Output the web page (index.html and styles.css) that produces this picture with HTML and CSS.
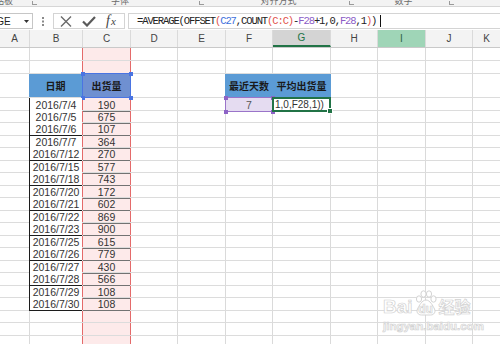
FILE: index.html
```html
<!DOCTYPE html>
<html lang="zh-CN">
<head>
<meta charset="utf-8">
<title>Excel - 平均出货量</title>
<link rel="stylesheet" href="styles.css">
</head>
<body>
<div class="app">
  <div class="ribbon">
    <div class="grp grp1"><span class="lbl">剪贴板</span><span class="launch"></span></div>
    <div class="grp grp2"><span class="lbl">字体</span><span class="launch"></span></div>
    <div class="grp grp3"><span class="lbl">对齐方式</span><span class="launch"></span></div>
    <div class="grp grp4"><span class="lbl">数字</span><span class="launch"></span></div>
  </div>

  <div class="fbar">
    <div class="namebox"><span class="nb-text">AVERAGE</span><svg class="nb-arrow" width="5" height="3" viewBox="0 0 5 3"><path d="M0 0H5L2.5 3Z" fill="#333"/></svg></div>
    <div class="grip"><svg width="2" height="9" viewBox="0 0 2 9"><rect x="0" y="0" width="2" height="2" fill="#8a8a8a"/><rect x="0" y="3.5" width="2" height="2" fill="#8a8a8a"/><rect x="0" y="7" width="2" height="2" fill="#8a8a8a"/></svg></div>
    <div class="fbtns">
      <svg class="ic-x" width="12" height="11" viewBox="0 0 12 11"><path d="M1 0.5L11 10.5M11 0.5L1 10.5" stroke="#6a6a6a" stroke-width="1.4" fill="none"/></svg>
      <svg class="ic-ok" width="14" height="11" viewBox="0 0 14 11"><path d="M1 5.5L5 9.5L13 1" stroke="#5a5a5a" stroke-width="2.2" fill="none"/></svg>
      <span class="ic-fx"><span class="fx-f">f</span><span class="fx-x">x</span></span>
    </div>
    <div class="finput"><span class="ftext">=AVERAGE(OFFSET<span class="pr">(</span><span class="rb">C27</span>,COUNT<span class="pr">(C:C)</span>-<span class="rp">F28</span>+1,0,<span class="rp">F28</span>,1<span class="pr">)</span>)</span><span class="caret"></span></div>
  </div>

  <div class="colhdr">
    <div class="ch">A</div><div class="ch">B</div><div class="ch">C</div><div class="ch">D</div><div class="ch">E</div><div class="ch">F</div><div class="ch sel">G</div><div class="ch">H</div><div class="ch hov">I</div><div class="ch">J</div><div class="ch">K</div>
  </div>

  <div class="sheet">
    <div class="row r13"></div>
    <div class="row r13"></div>
    <div class="row r24">
      <div class="cell hd hb">日期</div>
      <div class="cell hd hc">出货量<i class="h tl"></i><i class="h tr"></i><i class="h bl"></i><i class="h br"></i></div>
      <div class="cell hd hf">最近天数</div>
      <div class="cell hd hg">平均出货量</div>
    </div>
    <div class="row">
      <div class="cell b">2016/7/4</div><div class="cell c">190</div>
      <div class="cell days">7<i class="h tl"></i><i class="h tr"></i><i class="h bl"></i><i class="h br"></i></div>
      <div class="cell active"><span class="edit">1,0,F28,1))</span><i class="gh"></i></div>
    </div>
    <div class="row"><div class="cell b">2016/7/5</div><div class="cell c">675</div></div>
    <div class="row"><div class="cell b">2016/7/6</div><div class="cell c">107</div></div>
    <div class="row"><div class="cell b">2016/7/7</div><div class="cell c">364</div></div>
    <div class="row"><div class="cell b">2016/7/12</div><div class="cell c">270</div></div>
    <div class="row"><div class="cell b">2016/7/15</div><div class="cell c">577</div></div>
    <div class="row"><div class="cell b">2016/7/18</div><div class="cell c">743</div></div>
    <div class="row"><div class="cell b">2016/7/20</div><div class="cell c">172</div></div>
    <div class="row"><div class="cell b">2016/7/21</div><div class="cell c">602</div></div>
    <div class="row"><div class="cell b">2016/7/22</div><div class="cell c">869</div></div>
    <div class="row"><div class="cell b">2016/7/23</div><div class="cell c">900</div></div>
    <div class="row"><div class="cell b">2016/7/25</div><div class="cell c">615</div></div>
    <div class="row"><div class="cell b">2016/7/26</div><div class="cell c">779</div></div>
    <div class="row"><div class="cell b">2016/7/27</div><div class="cell c">430</div></div>
    <div class="row"><div class="cell b">2016/7/28</div><div class="cell c">566</div></div>
    <div class="row"><div class="cell b">2016/7/29</div><div class="cell c">108</div></div>
    <div class="row"><div class="cell b">2016/7/30</div><div class="cell c">108</div></div>
    <div class="row"></div>
    <div class="row"></div>
    <div class="row"></div>

    <div class="wm">
      <div class="wm-top">
        <span class="wm-bai">Bai</span>
        <span class="wm-paw"><svg width="26" height="26" viewBox="0 0 26 26"><g fill="#fff" stroke="#d2d2d2" stroke-width="1"><ellipse cx="6" cy="9" rx="2.6" ry="3.2"/><ellipse cx="10.5" cy="4" rx="2.6" ry="3.2"/><ellipse cx="16" cy="4" rx="2.6" ry="3.2"/><ellipse cx="20.5" cy="9" rx="2.6" ry="3.2"/><path d="M13 10C9 10 6 16 4.5 19C3 22 5 25 8.5 25H17.5C21 25 23 22 21.5 19C20 16 17 10 13 10Z"/></g></svg><span class="wm-du">du</span></span>
        <span class="wm-jy">经验</span>
      </div>
      <div class="wm-url">jingyan.baidu.com</div>
    </div>
  </div>
</div>
</body>
</html>
```

FILE: styles.css
```css
* { box-sizing: border-box; }

html, body {
  margin: 0;
  padding: 0;
}

body {
  width: 500px;
  height: 344px;
  overflow: hidden;
  background: #fff;
  font-family: "Liberation Sans", Arial, sans-serif;
}

.app {
  --cols: 30px 53px 48px 47px 48px 47px 58px 47px 48px 47px 28px;
  width: 500px;
  height: 344px;
  overflow: hidden;
  display: flex;
  flex-direction: column;
}

/* ribbon bottom strip */
.ribbon {
  flex: none;
  height: 7px;
  display: flex;
  background: #f3f3f3;
  border-bottom: 1px solid #d6d6d6;
  overflow: hidden;
}

.grp {
  flex: none;
  display: flex;
  align-items: flex-end;
}

.grp1 { width: 41px; justify-content: flex-end; }
.grp2 { width: 167px; }
.grp3 { width: 150px; }
.grp4 { width: 100px; }

.lbl {
  font: 9px/11px "Noto Sans CJK SC", sans-serif;
  color: #6a6a6a;
  white-space: nowrap;
  margin: 0 auto;
}

.grp1 .lbl { margin: 0; }
.grp1 .launch { margin-left: 19px; }

.launch {
  flex: none;
  width: 5px;
  height: 4px;
  margin: 0 4px 1px 0;
  border-left: 1px solid #9a9a9a;
  border-bottom: 1px solid #9a9a9a;
}

/* formula bar */
.fbar {
  flex: none;
  height: 23px;
  display: flex;
  align-items: flex-start;
  padding-top: 6px;
  background: #fff;
}

.namebox {
  flex: none;
  margin-left: -41px;
  width: 74px;
  height: 16px;
  border: 1px solid #c6c6c6;
  display: flex;
  align-items: center;
  justify-content: space-between;
  padding: 0 3px;
  font-size: 10px;
  color: #222;
}

.grip {
  flex: none;
  width: 20px;
  height: 16px;
  display: flex;
  align-items: center;
  justify-content: center;
}

.fbtns {
  flex: none;
  width: 72px;
  height: 16px;
  border: 1px solid #d4d4d4;
  display: flex;
  align-items: center;
  padding-left: 6px;
  gap: 10px;
}

.ic-fx {
  font-family: "Liberation Serif", serif;
  font-style: italic;
  color: #444;
  line-height: 14px;
  display: flex;
  align-items: baseline;
}

.fx-f { font-size: 14px; }
.fx-x { font-size: 11px; margin-left: 1px; }

.finput {
  flex: 1;
  margin-left: 3px;
  height: 16px;
  border: 1px solid #d4d4d4;
  border-right: none;
  display: flex;
  align-items: center;
  padding-left: 8px;
}

.ftext {
  font-family: "Liberation Mono", monospace;
  font-size: 10.5px;
  letter-spacing: -1.1px;
  color: #222;
  white-space: nowrap;
}

.pr { color: #e2534d; }
.rb { color: #3d6fdc; }
.rp { color: #8b5cc6; }

.caret {
  width: 1px;
  height: 12px;
  background: #111;
  margin-left: 4px;
}

/* column headers */
.colhdr {
  flex: none;
  height: 18px;
  display: grid;
  grid-template-columns: var(--cols);
  background: #f3f3f3;
  border-bottom: 1px solid #c9c9c9;
}

.ch {
  border-right: 1px solid #dadada;
  text-align: center;
  font-size: 10px;
  line-height: 17px;
  color: #444;
}

.ch.sel {
  background: #d4d4d4;
  border-bottom: 2px solid #217346;
  color: #217346;
  line-height: 15px;
}

.ch.hov {
  background: #9fd5b7;
  color: #2f5f45;
}

/* sheet */
.sheet {
  flex: 1;
  position: relative;
  overflow: hidden;
  background:
    linear-gradient(to right, transparent 82px, #e46a6a 82px 83px, #fdeaea 83px 130px, #e46a6a 130px 131px, transparent 131px),
    linear-gradient(to right,
      transparent 29px, #dadada 29px 30px,
      transparent 30px 82px, #dadada 82px 83px,
      transparent 83px 130px, #dadada 130px 131px,
      transparent 131px 177px, #dadada 177px 178px,
      transparent 178px 225px, #dadada 225px 226px,
      transparent 226px 272px, #dadada 272px 273px,
      transparent 273px 330px, #dadada 330px 331px,
      transparent 331px 377px, #dadada 377px 378px,
      transparent 378px 425px, #dadada 425px 426px,
      transparent 426px 472px, #dadada 472px 473px,
      transparent 473px);
}

.row {
  flex: none;
  height: 12.5px;
  display: grid;
  grid-template-columns: var(--cols);
  border-bottom: 1px solid #dcdcdc;
}

.r13 { height: 13px; }
.r24 { height: 24px; }

.cell {
  position: relative;
  display: flex;
  align-items: center;
  justify-content: center;
  font-size: 10.5px;
  color: #333;
  white-space: nowrap;
}

.b {
  grid-column: 2;
  margin: 0 1px -1px -1px;
  background: #fff;
  border-left: 1px solid #1c1c1c;
  border-bottom: 1px solid #1c1c1c;
}

.c {
  grid-column: 3;
  margin: 0 1px -1px 0;
  border-bottom: 1px solid #727272;
}

.hd {
  font-family: "Noto Sans CJK SC", sans-serif;
  font-weight: 700;
  font-size: 10px;
  color: #1a1a1a;
  background: #5b9bd5;
}

.hb { grid-column: 2; margin: 0 1px 0 -1px; }
.hc {
  grid-column: 3;
  margin: -1px 0 -1px -1px;
  background: #6f90d1;
  border: 1px solid #4a74e2;
}
.hf { grid-column: 6; margin-left: -1px; }
.hg { grid-column: 7; margin-left: -1px; }

.h {
  position: absolute;
  width: 4px;
  height: 4px;
  background: #4a74e2;
}
.tl { left: -2.5px; top: -2.5px; }
.tr { right: -2.5px; top: -2.5px; }
.bl { left: -2.5px; bottom: -2.5px; }
.br { right: -2.5px; bottom: -2.5px; }

.days {
  grid-column: 6;
  margin: -1px 0 -1px -1px;
  background: #e5dcf1;
  border: 1px solid #9a74c9;
  color: #555;
}
.days .h { background: #8d63c6; }

.active {
  grid-column: 7;
  margin: -1px 0 -1px -1px;
  background: #fff;
  border: 2px solid #217346;
  justify-content: flex-start;
  padding-left: 1px;
  font-size: 10px;
}

.gh {
  position: absolute;
  right: -4px;
  bottom: -4px;
  width: 6px;
  height: 6px;
  background: #217346;
  border: 1px solid #fff;
}

/* watermark */
.wm {
  position: absolute;
  left: 383px;
  top: 242px;
  color: #fff;
  -webkit-text-stroke: 0.7px #d0d0d0;
  opacity: 0.95;
}

.wm-top {
  display: flex;
  align-items: flex-end;
  height: 26px;
}

.wm-bai {
  font-family: "Liberation Sans", sans-serif;
  font-weight: 700;
  font-size: 19px;
  line-height: 19px;
}

.wm-paw {
  position: relative;
  width: 26px;
  height: 26px;
  display: flex;
  align-items: flex-end;
  justify-content: center;
}

.wm-paw svg {
  position: absolute;
  left: 0;
  top: 0;
}

.wm-du {
  position: relative;
  font-weight: 700;
  font-size: 12px;
  line-height: 14px;
}

.wm-jy {
  font-family: "Noto Sans CJK SC", sans-serif;
  font-weight: 700;
  font-size: 16px;
  line-height: 19px;
}

.wm-url {
  font-weight: 700;
  font-size: 11.5px;
  line-height: 14px;
  margin-top: 3px;
}
```
